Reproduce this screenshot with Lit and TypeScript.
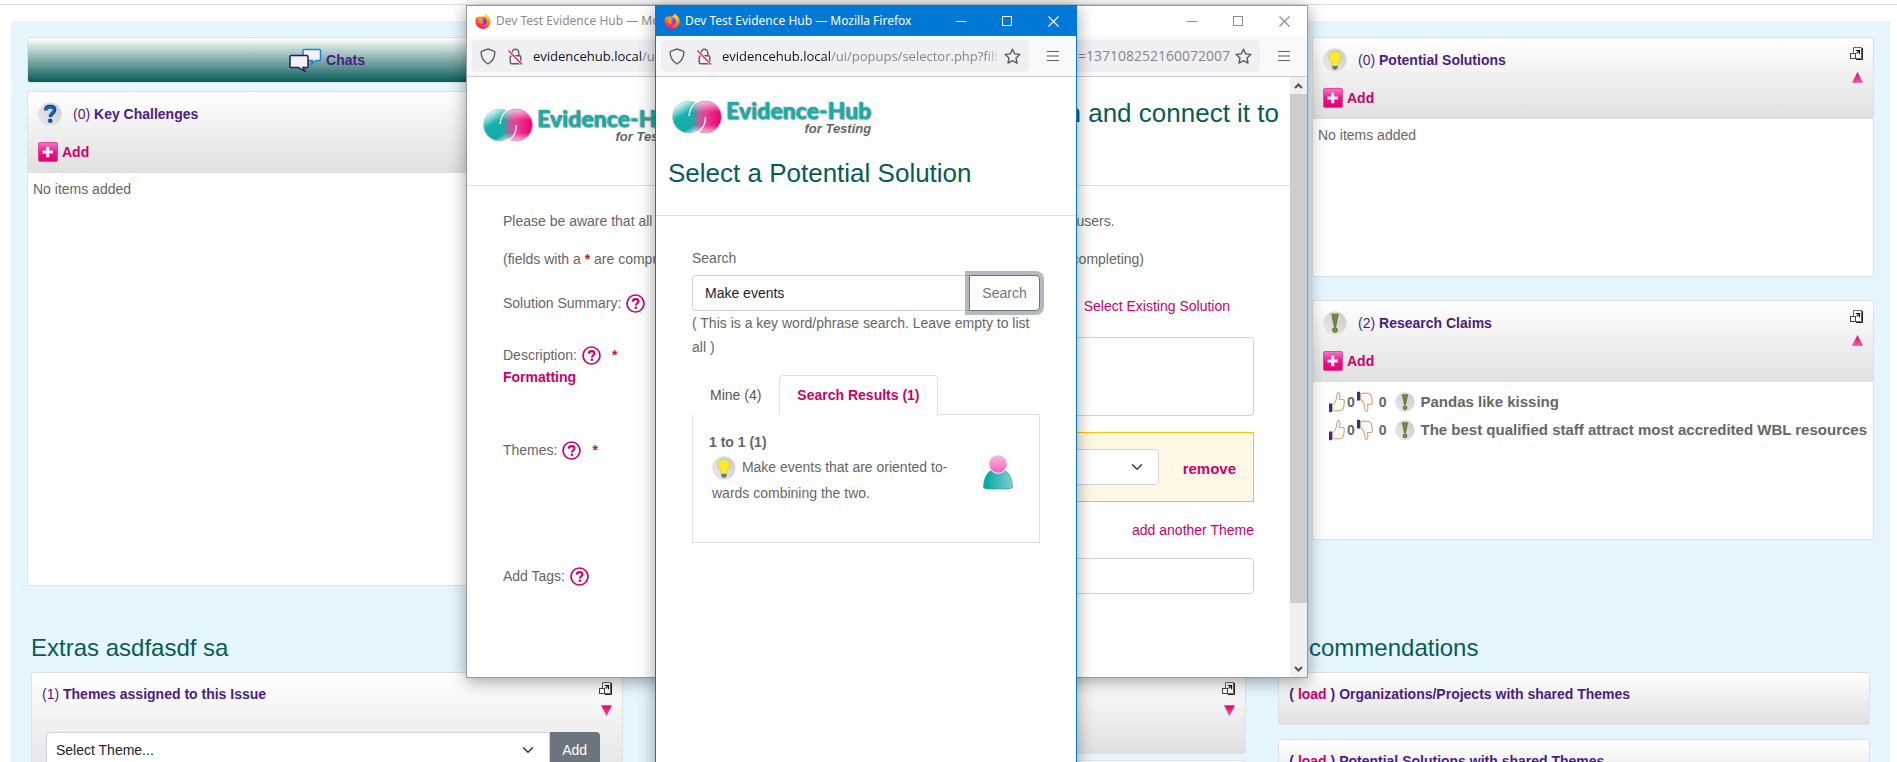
import { LitElement, html, css, svg, nothing } from "lit";
import { customElement, property } from "lit/decorators.js";

/* ---------- icons ---------- */

const disc = svg`
  <defs><linearGradient id="disc" x1="1" y1="0" x2="0" y2="1">
    <stop offset="0" stop-color="#c9c9c9"/><stop offset="1" stop-color="#ececec"/>
  </linearGradient></defs>
  <circle cx="12" cy="12" r="11.3" fill="url(#disc)" stroke="#dedede"/>`;

const bulbIcon = (size = 24) => html`
  <svg class="icon" width=${size} height=${size} viewBox="0 0 24 24" aria-hidden="true">
    ${disc}
    <path d="M12 3.4c-3.6 0-6 2.5-6 5.6 0 2.4 1.6 3.9 2.5 5.5.6 1 .5 2.6.8 3.5h5.4c.3-.9.2-2.5.8-3.5.9-1.6 2.5-3.1 2.5-5.5 0-3.1-2.4-5.6-6-5.6z" fill="#f8ea2c" stroke="#d0c060" stroke-width=".7"/>
    <rect x="9.2" y="18" width="5.6" height="2.4" fill="#777"/>
    <rect x="10.4" y="20.2" width="3.2" height="1.3" fill="#555"/>
  </svg>`;

const claimIcon = (size = 24) => html`
  <svg class="icon" width=${size} height=${size} viewBox="0 0 24 24" aria-hidden="true">
    ${disc}
    <path d="M8.8 3.2h6.4l-2.4 12.2h-1.6z" fill="#6d8d35" stroke="#5a6650" stroke-width=".8"/>
    <circle cx="12" cy="19" r="2.3" fill="#7ea12f" stroke="#3f5a20" stroke-width="1"/>
  </svg>`;

const challengeIcon = () => html`
  <svg class="icon" width="24" height="24" viewBox="0 0 24 24" aria-hidden="true">
    ${disc}
    <path d="M7.6 8.3c.2-2.6 2-3.7 4.4-3.7 2.7 0 4.6 1.3 4.6 3.5 0 3.2-4.3 3.2-4.3 6.9" fill="none" stroke="#123f93" stroke-width="3.6"/>
    <path d="M7.8 8.1c.3-2.3 2-3.2 4.2-3.2 2.5 0 4.1 1.2 4.1 3.2 0 3-4.1 3.2-4.1 6.7" fill="none" stroke="#1466c0" stroke-width="2"/>
    <circle cx="12.2" cy="18.7" r="2" fill="#1552a8" stroke="#123f93" stroke-width=".6"/>
  </svg>`;

const plusIcon = () => html`
  <svg class="icon" width="20" height="20" viewBox="0 0 20 20" aria-hidden="true">
    <defs><linearGradient id="plus" x1="0" y1="0" x2="0" y2="1">
      <stop offset="0" stop-color="#ec7fc0"/><stop offset=".55" stop-color="#e8128a"/><stop offset="1" stop-color="#e2006f"/>
    </linearGradient></defs>
    <rect x=".5" y=".5" width="19" height="19" rx="1.5" fill="url(#plus)" stroke="#e8469b"/>
    <path d="M8.2 4.8h3.1v3.6h3.7v3.1h-3.7v3.7H8.2v-3.7H4.5V8.4h3.7z" fill="#f1ecef"/>
  </svg>`;

const expandIcon = () => html`
  <svg width="13" height="13" viewBox="0 0 13 13" aria-hidden="true">
    <path d="M3.5 6V.5h8v11H6" fill="#fff" stroke="#666"/>
    <path d="M12.5 1v11.5H6" fill="none" stroke="#222"/>
    <rect x=".5" y="6.5" width="5" height="5" fill="#fff" stroke="#444"/>
    <path d="M5.8 3.5h3.7v3.7M9.3 3.7L6.6 6.4" fill="none" stroke="#111" stroke-width="1.2"/>
  </svg>`;

const triangle = (down: boolean) => html`
  <svg width="11" height="11" viewBox="0 0 11 11" aria-hidden="true">
    <defs><linearGradient id="tri" x1="0" y1="0" x2="0" y2="1">
      <stop offset="0" stop-color=${down ? "#f05aac" : "#e0006c"}/><stop offset="1" stop-color=${down ? "#e0006c" : "#f05aac"}/>
    </linearGradient></defs>
    <path d=${down ? "M.4.5h10.2L5.5 10.7z" : "M.4 10.5h10.2L5.5.3z"} fill="url(#tri)" stroke="#d83c90" stroke-width=".5"/>
  </svg>`;

const thumb = (down: boolean) => html`
  <svg width="16" height="22" viewBox="0 0 16 22" aria-hidden="true">
    <g transform=${down ? "matrix(1 0 0 -1 0 22)" : ""}>
      <path d="M3.5 19.5V13.5c2-1 3.5-3.6 4-6.5.3-2 .4-5 1.5-5.5 1.5-.4 2 1.5 1.8 3.5-.1 1.5-.4 2.5-.3 3.5h3.3c1.3 0 1.7 1 1.3 2 .4.9.3 1.9-.2 2.7.3.9.1 1.9-.5 2.6.2 1-.2 1.900-.9 2.400-.6 1-1.200 1.500-2.500 1.600-3 .2-5.500.2-7.500-.3z" fill="#fffaf5" stroke="#d2a580" stroke-width="1.1"/>
      <rect x="0" y="12.5" width="3" height="8.7" fill="#33318c"/>
    </g>
  </svg>`;

const chatIcon = () => html`
  <svg width="33" height="24" viewBox="0 0 33 24" aria-hidden="true">
    <path d="M15 1.5h15.5q1 0 1 1v9q0 1-1 1h-3.5l-4.5 3.5 1-3.5H15q-1 0-1-1v-9q0-1 1-1z" fill="#f3f3f5" stroke="#1f83c4" stroke-width="1.5"/>
    <path d="M2 7.5h16q1 0 1 1v10q0 1-1 1h-4l2 3.800-6.500-3.800H2q-1 0-1-1v-10q0-1 1-1z" fill="#f3f3f5" stroke="#2a1a6e" stroke-width="1.5"/>
  </svg>`;

const helpIcon = () => html`
  <svg class="help" width="19" height="19" viewBox="0 0 19 19" role="img" aria-label="Help">
    <circle cx="9.5" cy="9.5" r="8.5" fill="#fff" stroke="#cd0069" stroke-width="1.7"/>
    <path d="M6.7 7.6c.2-1.7 1.3-2.5 2.9-2.5 1.7 0 2.9.9 2.9 2.3 0 1.9-2.6 1.9-2.6 4" fill="none" stroke="#cd0069" stroke-width="2.1"/>
    <rect x="8.7" y="12.6" width="2.3" height="2.2" fill="#cd0069"/>
  </svg>`;

const personIcon = () => html`
  <svg class="person" width="30" height="36" viewBox="0 0 30 36" aria-hidden="true">
    <defs>
      <linearGradient id="head" x1="0" y1="0" x2="0" y2="1"><stop offset="0" stop-color="#f3bfda"/><stop offset="1" stop-color="#ff5cc4"/></linearGradient>
      <linearGradient id="torso"><stop offset=".1" stop-color="#06aaa4"/><stop offset="1" stop-color="#7fcdd0"/></linearGradient>
    </defs>
    <path d="M.6 33.5C.3 22 6.5 14.5 15 14.5S29.7 22 29.4 33.5q-1 1.500-6 1.500H6.600q-5 0-6-1.500z" fill="url(#torso)" stroke="#2f9c98" stroke-width=".7"/>
    <circle cx="15" cy="10" r="9.3" fill="url(#head)" stroke="#fff" stroke-width="1"/>
  </svg>`;

const logo = () => html`
  <div class="logo">
    <svg width="50" height="34" viewBox="0 0 50 34" aria-hidden="true">
      <defs>
        <linearGradient id="teal" x1=".1" y1="0" x2=".7" y2="1">
          <stop offset=".08" stop-color="#fff"/><stop offset=".42" stop-color="#17b2ad"/><stop offset=".8" stop-color="#12aaa6"/><stop offset="1" stop-color="#bfeae9"/>
        </linearGradient>
        <linearGradient id="rose" x1="0" y1="0" x2="1" y2="0">
          <stop offset=".08" stop-color="#17aca8"/><stop offset=".3" stop-color="#b8609d"/><stop offset=".5" stop-color="#ee3b98"/><stop offset="1" stop-color="#e5006d"/>
        </linearGradient>
        <linearGradient id="gloss" x1="0" y1="0" x2="0" y2="1">
          <stop offset="0" stop-color="#fff" stop-opacity=".7"/><stop offset=".35" stop-color="#fff" stop-opacity="0"/><stop offset=".75" stop-color="#fff" stop-opacity="0"/><stop offset="1" stop-color="#fff" stop-opacity=".65"/>
        </linearGradient>
      </defs>
      <circle cx="16.5" cy="17" r="16" fill="url(#teal)" stroke="#9ccfce" stroke-width=".7"/>
      <circle cx="33.5" cy="17" r="16" fill="url(#rose)"/>
      <circle cx="33.5" cy="17" r="16" fill="url(#gloss)"/>
      <path d="M25 3.400A16 16 0 1 1 25 30.600" fill="none" stroke="#d988b4" stroke-width=".7"/>
      <path d="M17 16C17.500 8.500 21 4 26 1.500M33.500 17C33.500 24 30.500 29.500 25 32.500" fill="none" stroke="#fff" stroke-width="1.3"/>
    </svg>
    <div class="wordmark"><strong>Evidence-Hub</strong><em>for Testing</em></div>
  </div>`;

/* ---------- browser window frame ---------- */

@customElement("browser-window")
export class BrowserWindow extends LitElement {
  @property({ type: Boolean, reflect: true }) active = false;
  @property({ type: Boolean }) scrollbar = false;
  @property() host = "";
  @property() path = "";
  @property() tail = "";

  static styles = css`
    :host {
      box-sizing: border-box;
      display: flex;
      flex-direction: column;
      background: #fff;
      border: 1px solid #9a9a9a;
      box-shadow: 0 3px 16px rgba(0, 0, 0, 0.38);
      overflow: hidden;
    }
    :host([active]) { border-color: #0078d7; }
    button { border: 0; padding: 0; background: none; color: inherit; display: flex; }
    .title {
      display: flex;
      align-items: center;
      height: 30px;
      padding-left: 8px;
      color: #8c8c8c;
      font: 12px/20px "Noto Sans", "Open Sans", sans-serif;
      white-space: nowrap;
    }
    :host([active]) .title { background: #0078d7; color: #fff; }
    .title .name { flex: 1; margin-left: 5px; }
    .controls { display: flex; }
    .controls button { width: 46px; height: 30px; align-items: center; justify-content: center; }
    .tools {
      display: flex;
      align-items: center;
      height: 40px;
      background: #f9f9fb;
      border-bottom: 1px solid #ccc;
      color: #5b5b66;
    }
    .address {
      flex: 1;
      min-width: 0;
      display: flex;
      align-items: center;
      height: 32px;
      box-sizing: border-box;
      margin-left: 5px;
      padding: 0 8px;
      background: #f0f0f4;
      border-radius: 4px;
      font: 13px/20px "Open Sans", "Noto Sans", sans-serif;
    }
    .url { flex: 1; min-width: 0; overflow: hidden; display: flex; white-space: nowrap; margin: 0 5px 0 0; color: #85858d; }
    .url.fade { mask-image: linear-gradient(to left, transparent, #000 12px); }
    .url b { font-weight: 400; color: #15141a; }
    .tail { margin-left: auto; font-size: 14px; }
    .shield { margin-right: 12px; }
    .lock { margin-right: 10px; }
    .menu { width: 47px; justify-content: center; }
    .page { flex: 1; min-height: 0; display: flex; }
    .content { flex: 1; min-width: 0; }
    .scroll { width: 17px; display: flex; flex-direction: column; background: #f0f0f0; }
    .scroll span { height: 17px; display: flex; align-items: center; justify-content: center; }
    .track { flex: 1; }
    .thumb { height: 90%; background: #cdcdcd; }
    svg { flex: none; }
  `;

  render() {
    return html`
      <div class="title">
        <svg width="16" height="16" viewBox="0 0 16 16" aria-hidden="true">
          <defs>
            <linearGradient id="fx" x1=".8" y1="0" x2=".3" y2="1">
              <stop offset=".1" stop-color="#ffe226"/><stop offset=".45" stop-color="#ff8a16"/><stop offset=".8" stop-color="#ff3647"/><stop offset="1" stop-color="#e31587"/>
            </linearGradient>
          </defs>
          <path d="M10.5.3c1 1.5 2.2 2.1 3.2 3.3 1.2 1.3 1.9 2.9 1.9 4.900A7.600 7.400 0 0 1 .4 8.600C.3 6.300 1 4.500 2.200 3.200l.2 1.200C3.300 3.600 4 3.400 5 3.500 6.500 3.600 8 3.500 9.200 3c.8-.8 1.100-1.700 1.300-2.700z" fill="url(#fx)"/>
          <circle cx="8.2" cy="8.3" r="3.5" fill="#7542e5"/>
          <path d="M3 5.5c1.5-1.3 3.5-1 4.6.2 1 .2 1.700.4 1.800.9-.4.900-1.900.7-2.200 1.600-.1 1 .8 1.700 1.800 1.600-1 1.500-4 1.400-5-.8C3.600 7.800 3.700 6.400 3 5.500z" fill="#ff9a1f"/>
        </svg>
        <span class="name">Dev Test Evidence Hub — Mozilla Firefox</span>
        <div class="controls">
          <button aria-label="Minimize"><svg width="11" height="11"><path d="M0 5.5h10" stroke="currentColor"/></svg></button>
          <button aria-label="Maximize"><svg width="11" height="11"><rect x=".5" y=".5" width="9" height="9" fill="none" stroke="currentColor"/></svg></button>
          <button aria-label="Close"><svg width="11" height="11"><path d="M.5.5l10 10M10.5.5l-10 10" stroke="currentColor" stroke-width="1.1"/></svg></button>
        </div>
      </div>
      <div class="tools">
        <div class="address">
          <svg class="shield" width="16" height="17" viewBox="0 0 16 17" fill="none" stroke="currentColor" stroke-width="1.4" aria-hidden="true">
            <path d="M8 1l6 2.2c.9.3 1 .8.9 1.6C14.6 9.5 12.5 13.5 8 16 3.5 13.5 1.4 9.5 1.1 4.8 1 4 1.1 3.5 2 3.2z"/>
          </svg>
          <svg class="lock" width="15" height="17" viewBox="0 0 15 17" fill="none" aria-hidden="true">
            <rect x="2.2" y="7.7" width="10.6" height="8" rx="1.5" stroke="currentColor" stroke-width="1.4"/>
            <path d="M4.2 7.5V4.5a3.3 3.3 0 0 1 6.6 0v3" stroke="currentColor" stroke-width="1.4"/>
            <path d="M.5 2.5l13.5 14" stroke="#f0f0f4" stroke-width="3"/>
            <path d="M.5 2.5l13.5 14" stroke="#e22850" stroke-width="1.3"/>
          </svg>
          <div class="url ${this.tail ? "" : "fade"}"><b>${this.host}</b><span>${this.path}</span>${this.tail ? html`<span class="tail">${this.tail}</span>` : nothing}</div>
          <button aria-label="Bookmark this page">
            <svg width="17" height="17" viewBox="0 0 17 17" fill="none" stroke="currentColor" stroke-width="1.4" stroke-linejoin="round">
              <path d="M8.5 1.2l2.2 4.7 5.1.6-3.8 3.500 1 5.200-4.500-2.600L4 15.200l1-5.200L1.200 6.500l5.100-.6z"/>
            </svg>
          </button>
        </div>
        <button class="menu" aria-label="Open menu">
          <svg width="12" height="12"><path d="M0 1.5h12M0 6h12M0 10.5h12" stroke="currentColor" stroke-width="1.2"/></svg>
        </button>
      </div>
      <div class="page">
        <div class="content"><slot></slot></div>
        ${this.scrollbar
          ? html`<div class="scroll">
              <span><svg width="9" height="6"><path d="M1 5l3.5-3.5L8 5" fill="none" stroke="#555" stroke-width="2"/></svg></span>
              <div class="track"><div class="thumb"></div></div>
              <span><svg width="9" height="6"><path d="M1 1l3.5 3.5L8 1" fill="none" stroke="#555" stroke-width="2"/></svg></span>
            </div>`
          : nothing}
      </div>`;
  }
}

/* ---------- page ---------- */

type Panel = { count: number; title: string; icon: unknown; items?: string[] };

@customElement("app-root")
export class AppRoot extends LitElement {
  static styles = css`
    :host {
      display: block;
      position: relative;
      height: 100vh;
      overflow: hidden;
      background: #fff;
      color: #666;
      font: 14px/24px "Liberation Sans", Arial, sans-serif;
    }
    * { box-sizing: border-box; }
    h1, h2, h3, p, ul { margin: 0; padding: 0; font-weight: 400; }
    a { color: #cd0069; text-decoration: none; }
    button, input, select, textarea { font: inherit; margin: 0; }
    svg { flex: none; }

    .desk { margin-top: 4px; border-top: 1px solid #dee2e6; padding: 16px 7px 0 11px; }
    .board { background: #e5f6ff; padding: 16px 16px 40px; }
    .top { display: grid; grid-template-columns: minmax(0, 600fr) minmax(0, 605fr) minmax(0, 562fr); column-gap: 40px; }
    .column { display: flex; flex-direction: column; }
    .chats {
      display: flex;
      justify-content: center;
      align-items: center;
      gap: 4px;
      height: 46px;
      margin-bottom: 8px;
      border: 1px solid #dee2e6;
      border-radius: 3px;
      background: linear-gradient(#fff, #075c58);
      color: #4b1d82;
      font-weight: 700;
    }
    .chats a { color: inherit; }
    .card { background: #fff; border: 1px solid #dee2e6; min-height: 240px; }
    .column .card + .card { margin-top: 23px; }
    .card.tall { min-height: 495px; }
    .head { display: flex; justify-content: space-between; background: linear-gradient(#fff, #e0e0e0); color: #4b1d82; }
    .card .head { height: 81px; padding: 9px 10px 0 10px; }
    .heading { display: flex; align-items: center; height: 25px; gap: 11px; }
    .heading h3 { font-size: 14px; line-height: 24px; }
    .add { display: flex; align-items: center; gap: 4px; height: 24px; margin-top: 14px; font-weight: 700; }
    .side { display: flex; flex-direction: column; align-items: flex-end; gap: 12px; }
    .side a, .side svg { display: block; }
    .body { padding: 4px 5px; }
    .items { list-style: none; padding: 6px 0 6px 16px; font-weight: 700; white-space: nowrap; }
    .items li { display: flex; align-items: center; height: 28px; font-size: 15px; }
    .items .vote { display: flex; align-items: center; gap: 2px; font-size: 14px; }
    .items .icon { margin: 0 5px 0 9px; }

    h2 { font-size: 24px; line-height: 32px; color: #075c58; }
    .bottom { display: grid; grid-template-columns: repeat(3, minmax(0, 1fr)); gap: 32px; padding: 46px 4px 0; }
    .bottom h2 { margin-bottom: 8px; }
    .strip { border: 1px solid #dee2e6; border-radius: 3px; padding: 9px 10px 0 10px; margin-bottom: 14px; min-height: 53px; }
    .strip.block { display: block; }
    .strip.mid { min-height: 82px; margin-bottom: 6px; }
    .strip h3 { font-size: 14px; line-height: 24px; }
    .strip-top { display: flex; justify-content: space-between; }
    .strip .side { gap: 10px; }
    .group { display: flex; margin: 16px 12px 20px 4px; }
    .group select { flex: 1; border-radius: 4px 0 0 4px; }
    .group button { width: 50px; border: 0; border-radius: 0 4px 4px 0; background: #6c757d; color: #fff; }

    select, input, textarea {
      display: block;
      height: 36px;
      padding: 0 12px;
      min-width: 0;
      color: #212529;
      background-color: #fff;
      border: 1px solid #ced4da;
      border-radius: 4px;
      outline: 0;
    }
    select {
      appearance: none;
      padding-left: 9px;
      background: #fff url("data:image/svg+xml,%3Csvg xmlns='http://www.w3.org/2000/svg' viewBox='0 0 16 16'%3E%3Cpath fill='none' stroke='%23343a40' stroke-linecap='round' stroke-linejoin='round' stroke-width='2' d='m2 5 6 6 6-6'/%3E%3C/svg%3E") no-repeat right 15px center / 12px;
    }

    .back { position: absolute; left: 466px; top: 5px; width: 842px; height: 673px; }
    .front { position: absolute; left: 655px; top: 5px; width: 422px; height: calc(100vh + 24px); }

    .logo { display: flex; align-items: center; gap: 4px; height: 38px; white-space: nowrap; }
    .wordmark { display: flex; flex-direction: column; align-items: flex-end; }
    .wordmark strong {
      font: 900 23px/24px Lato, "Liberation Sans", sans-serif;
      color: #12b0ac;
      text-shadow: 0 0 2px #888, 1px 1px 1px #aaa;
    }
    .wordmark em { font: italic 700 13px/14px "Liberation Sans", sans-serif; color: #666; }
    h1 { font-size: 26px; line-height: 32px; color: #075c58; white-space: nowrap; }
    .banner { border-bottom: 1px solid #dee2e6; }
    .back .banner { display: flex; align-items: flex-start; height: 109px; padding: 20px 11px 0 16px; }
    .back .logo { margin-top: 9px; }
    .back h1 { margin-left: auto; }
    .front .banner { padding: 21px 12px 26px; }
    .front .logo { padding-left: 4px; margin-bottom: 21px; }

    .form { padding: 23px 36px; }
    .form p { white-space: nowrap; margin-bottom: 14px; }
    .field { display: flex; align-items: flex-start; margin-bottom: 16px; }
    .label { width: 188px; flex: none; padding-top: 7px; line-height: 22px; }
    .label .line { display: flex; align-items: center; gap: 5px; height: 22px; }
    .req { color: #b3261e; font-weight: 700; }
    .line .req { padding-left: 6px; }
    .field > input, .field > textarea { flex: 1; }
    .field > .pick { margin: 6px 24px 0 8px; line-height: 30px; }
    textarea { height: 79px; resize: none; }
    .themes { flex: 1; display: flex; flex-direction: column; gap: 16px; align-items: stretch; text-align: right; }
    .theme { display: flex; align-items: center; height: 70px; padding: 0 17px; background: #fff8e6; border: 1px solid #ffc107; }
    .theme select { flex: 1; margin-right: 24px; }
    .theme a { font-weight: 700; font-size: 15px; padding-top: 4px; }

    .selector { padding: 30px 36px; }
    .selector > label { display: block; margin-bottom: 5px; }
    .search { display: flex; }
    .search input { flex: 1; border-radius: 4px 0 0 4px; border-right: 0; }
    .search button {
      width: 71px;
      color: #6c757d;
      background: #fff;
      border: 1px solid #6c757d;
      border-radius: 0 4px 4px 0;
      box-shadow: 0 0 0 4px rgba(108, 117, 125, 0.5);
    }
    .tabs { display: flex; margin-top: 16px; position: relative; }
    .tabs button { height: 40px; padding: 0 17px; background: #fff; border: 1px solid transparent; color: #555; margin-bottom: -1px; }
    .tabs button.on { border-color: #dee2e6 #dee2e6 #fff; border-radius: 4px 4px 0 0; color: #cd0069; font-weight: 700; }
    .results { border: 1px solid #dee2e6; min-height: 129px; padding: 15px 16px; }
    .result { display: flex; justify-content: space-between; padding-left: 3px; line-height: 26px; }
    .result p { width: 252px; }
    .result .icon { vertical-align: middle; margin-right: 2px; }
    .person { margin-right: 10px; }
  `;

  private side(down: boolean) {
    return html`<div class="side">
      <a href="#" aria-label="Expand">${expandIcon()}</a>
      <a href="#" aria-label="Toggle">${triangle(down)}</a>
    </div>`;
  }

  private card(p: Panel, tall = false) {
    return html`<section class="card ${tall ? "tall" : ""}">
      <div class="head">
        <div>
          <div class="heading">${p.icon}<h3>(${p.count}) <b>${p.title}</b></h3></div>
          <a class="add" href="#">${plusIcon()}Add</a>
        </div>
        ${this.side(false)}
      </div>
      ${p.items
        ? html`<ul class="items">
            ${p.items.map((t) => html`<li>
              <span class="vote">${thumb(false)}0${thumb(true)}&nbsp;0</span>${claimIcon(20)}${t}
            </li>`)}
          </ul>`
        : html`<div class="body">No items added</div>`}
    </section>`;
  }

  private load(title: string) {
    return html`<section class="head strip"><h3><b>( <a href="#">load</a> ) ${title}</b></h3></section>`;
  }

  render() {
    return html`
      <main class="desk">
        <div class="board">
          <div class="top">
            <div class="column">
              <div class="chats">${chatIcon()}<a href="#">Chats</a></div>
              ${this.card({ count: 0, title: "Key Challenges", icon: challengeIcon() }, true)}
            </div>
            <div class="column"></div>
            <div class="column">
              ${this.card({ count: 0, title: "Potential Solutions", icon: bulbIcon() })}
              ${this.card({
                count: 2,
                title: "Research Claims",
                icon: claimIcon(),
                items: ["Pandas like kissing", "The best qualified staff attract most accredited WBL resources"],
              })}
            </div>
          </div>
          <div class="bottom">
            <div>
              <h2>Extras asdfasdf sa</h2>
              <section class="head strip block">
                <div class="strip-top"><h3>(1) <b>Themes assigned to this Issue</b></h3>${this.side(true)}</div>
                <div class="group">
                  <select aria-label="Theme"><option>Select Theme...</option></select>
                  <button>Add</button>
                </div>
              </section>
            </div>
            <div>
              <h2>&nbsp;</h2>
              <section class="head strip mid"><span></span>${this.side(true)}</section>
              <section class="head strip mid"><span></span>${this.side(true)}</section>
            </div>
            <div>
              <h2>Recommendations</h2>
              ${this.load("Organizations/Projects with shared Themes")}
              ${this.load("Potential Solutions with shared Themes")}
            </div>
          </div>
        </div>
      </main>

      <browser-window class="back" scrollbar host="evidencehub.local" path="/ui/popups/" tail="=137108252160072007">
        <div class="banner">${logo()}<h1>Add a Potential Solution and connect it to</h1></div>
        <form class="form">
          <p>Please be aware that all data you enter here will be publicly viewable on this site by all other users.</p>
          <p>(fields with a <span class="req">*</span> are compulsory, unless they are in an optional sub-section which you are not completing)</p>
          <div class="field">
            <div class="label"><div class="line"><label for="summary">Solution Summary:</label>${helpIcon()}<span class="req">*</span></div></div>
            <input id="summary" type="text" />
            <a class="pick" href="#">Select Existing Solution</a>
          </div>
          <div class="field">
            <div class="label">
              <div class="line"><label for="desc">Description:</label>${helpIcon()}<span class="req">*</span></div>
              <a href="#"><b>Formatting</b></a>
            </div>
            <textarea id="desc"></textarea>
          </div>
          <div class="field">
            <div class="label"><div class="line"><label for="theme">Themes:</label>${helpIcon()}<span class="req">*</span></div></div>
            <div class="themes">
              <div class="theme"><select id="theme"><option></option></select><a href="#">remove</a></div>
              <a href="#">add another Theme</a>
            </div>
          </div>
          <div class="field">
            <div class="label"><div class="line"><label for="tags">Add Tags:</label>${helpIcon()}</div></div>
            <input id="tags" type="text" />
          </div>
        </form>
      </browser-window>

      <browser-window class="front" active host="evidencehub.local" path="/ui/popups/selector.php?filternodetypes">
        <div class="banner">${logo()}<h1>Select a Potential Solution</h1></div>
        <div class="selector">
          <label for="q">Search</label>
          <div class="search"><input id="q" type="text" .value=${"Make events"} /><button>Search</button></div>
          <p>( This is a key word/phrase search. Leave empty to list all )</p>
          <div class="tabs" role="tablist">
            <button role="tab">Mine (4)</button>
            <button role="tab" class="on" aria-selected="true">Search Results (1)</button>
          </div>
          <div class="results">
            <b>1 to 1 (1)</b>
            <div class="result">
              <p>${bulbIcon()} Make events that are oriented to&shy;wards combining the two.</p>
              ${personIcon()}
            </div>
          </div>
        </div>
      </browser-window>
    `;
  }
}
